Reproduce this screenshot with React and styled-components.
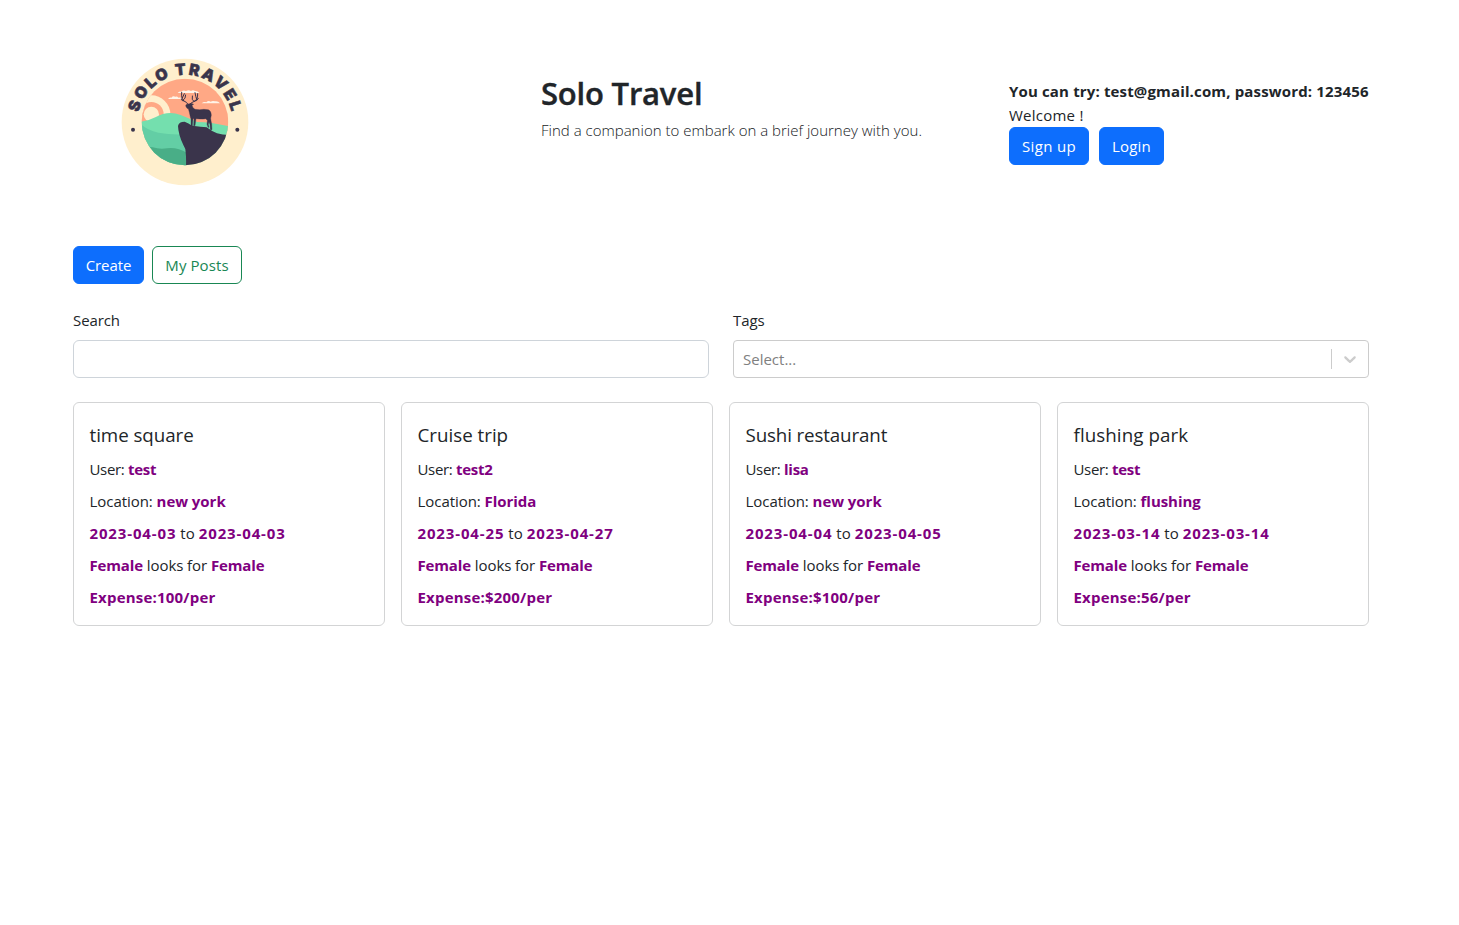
import React from 'react';
import styled, { createGlobalStyle } from 'styled-components';

const GlobalStyle = createGlobalStyle`
  *, *::before, *::after { box-sizing: border-box; }
  body {
    margin: 0;
    background: #fff;
    color: #212529;
    font-family: 'Open Sans', 'Noto Sans', sans-serif;
    font-size: 15px;
    line-height: 24px;
  }
  h1, h2, p { margin: 0; }
`;

const Page = styled.div`
  width: 1296px;
  margin-left: 73px;
`;

const Header = styled.header`
  display: grid;
  grid-template-columns: 468px 468px 360px;
  padding-top: 50px;
  height: 246px;
  align-items: start;
`;

const Logo = styled.svg`
  display: block;
  width: 140px;
  height: 140px;
  margin-left: 42px;
`;

const LogoText = styled.text`
  font-family: Inter, Roboto, sans-serif;
  font-weight: 900;
  font-size: 47px;
  fill: #3a344b;
  stroke: #3a344b;
  stroke-width: 1.5px;
`;

const Intro = styled.div`
  padding-top: 24px;
`;

const Title = styled.h1`
  font-size: 31px;
  font-weight: 600;
  line-height: 38px;
  letter-spacing: -0.2px;
  -webkit-text-stroke: 0.4px #212529;
  margin-bottom: 6px;
`;

const Lead = styled.p`
  font-weight: 300;
  color: #16191c;
  letter-spacing: 0.01px;
  white-space: nowrap;
`;

const Account = styled.div`
  padding-top: 29px;
  white-space: nowrap;
`;

const Run = styled.span`
  letter-spacing: ${({ $track }) => $track || 0}px;
  white-space: pre;
`;

const Hint = styled.p`
  font-weight: 700;
  letter-spacing: 0.15px;
`;

const ButtonRow = styled.div`
  display: flex;
  gap: ${({ $gap }) => $gap}px;
`;

const Button = styled.button`
  width: ${({ $width }) => $width}px;
  height: 38px;
  padding: 0;
  border: 1px solid ${({ $outline }) => ($outline ? '#198754' : '#0d6efd')};
  border-radius: 6px;
  background: ${({ $outline }) => ($outline ? '#fff' : '#0d6efd')};
  color: ${({ $outline }) => ($outline ? '#198754' : '#fff')};
  font: inherit;
  text-align: center;
`;

const Filters = styled.div`
  display: grid;
  grid-template-columns: 1fr 1fr;
  gap: 24px;
  padding: 24px 0;
`;

const Field = styled.div`
  display: flex;
  flex-direction: column;
  gap: 8px;
`;

const Label = styled.label`
  letter-spacing: -0.1px;
`;

const Input = styled.input`
  height: 38px;
  width: 100%;
  border: 1px solid #ced4da;
  border-radius: 6px;
  background: #fff;
  padding: 6px 12px;
  font: inherit;
`;

const Select = styled.div`
  display: flex;
  align-items: center;
  height: 38px;
  border: 1px solid #ccc;
  border-radius: 4px;
  padding-left: 9px;
  color: #808080;
`;

const Placeholder = styled.span`
  flex: 1;
`;

const Divider = styled.span`
  width: 1px;
  height: 20px;
  background: #ccc;
`;

const Chevron = styled.svg`
  width: 20px;
  height: 20px;
  margin: 0 8px;
  fill: #ccc;
`;

const Cards = styled.main`
  display: grid;
  grid-template-columns: repeat(4, 1fr);
  gap: 16px;
`;

const Card = styled.article`
  height: 224px;
  padding: 20px 15.5px 0;
  border: 1px solid #d3d4d5;
  border-radius: 6px;
`;

const CardTitle = styled.h2`
  font-size: 18.75px;
  font-weight: 400;
  line-height: 24px;
  margin-bottom: 10px;
  letter-spacing: ${({ $track }) => $track}px;
`;

const Line = styled.p`
  margin-bottom: 8px;
  white-space: nowrap;
`;

const Value = styled.strong`
  color: #800080;
  font-weight: 700;
  letter-spacing: ${({ $track }) => $track || 0}px;
`;

const trips = [
  { title: 'time square', track: -0.05, user: 'test', place: 'new york', from: '2023-04-03', to: '2023-04-03', cost: '100/per' },
  { title: 'Cruise trip', track: 0, user: 'test2', place: 'Florida', from: '2023-04-25', to: '2023-04-27', cost: '$200/per' },
  { title: 'Sushi restaurant', track: -0.13, user: 'lisa', place: 'new york', from: '2023-04-04', to: '2023-04-05', cost: '$100/per' },
  { title: 'flushing park', track: 0.08, user: 'test', place: 'flushing', from: '2023-03-14', to: '2023-03-14', cost: '56/per' },
];

function TravelLogo() {
  return (
    <Logo viewBox="0 0 420 420" role="img" aria-label="Solo Travel">
      <defs>
        <clipPath id="scene"><circle cx="210" cy="216" r="130" /></clipPath>
        <path id="arc" d="M71.6 248A142 142 0 1 1 348.4 248" />
      </defs>
      <circle cx="210" cy="216" r="190" fill="#ffefcd" />
      <g clipPath="url(#scene)">
        <rect x="80" y="86" width="260" height="260" fill="#ffa885" />
        <circle cx="109" cy="193" r="57" fill="#ffefcd" />
        <circle cx="109" cy="193" r="37" fill="#ffa885" />
        <circle cx="109" cy="193" r="23" fill="#ffefcd" />
        <path d="M159 147q5-5 10-4 5-7 12-3 6-2 9 3 8-1 12 4zM188 129q5-5 11-4 6-6 14-2 8-5 15 0 6-4 12 0 8-1 13 6zM260 160q7-6 14-3 6-7 13-2 6-4 13-1 9-2 15 6z" fill="#fff4e8" />
        <path d="M75 216q25-3 46-14 38-22 76-7 27 11 50 21 40 0 100 14v125H75z" fill="#74dfae" />
        <path d="M75 220q20 21 55 28 35 6 68 5l30 110H75z" fill="#63cea5" />
        <path d="M75 293q20-5 38-1 22 7 43 3 31-4 60 14v60H75z" fill="#49ae87" />
        <path d="M213 350q1-28-1-42 0-13-7-23-15-31-16-57 2-13 20-13 12 5 22 12 28 3 44 5 14 11 31 18 17 5 38 5v95z" fill="#3a344b" />
        <path d="M219 162l-6 2-1 4 4 7 4 1 3 11 3 14 2 6v21h4l2-22 3 0-1 21h4l3-21 12 1q9 1 17-1l5 5-1 12 3 9h3l-2-9 2-7 3 8 1 15h5l-1-17-2-10-1-7 2-9q0-13-9-17-14-2-26 0l-14-1-6-5-3-7 5-3-7-3z" fill="#3a344b" stroke="#3a344b" strokeWidth="1" strokeLinejoin="round" />
        <path d="M219 163q-3-7-12-10-9-6-7-26M206 153q-6 1-7-6M202 144l6-13M205 150q7-3 7-15M224 163q5-6 14-9 11-5 10-23M238 154q9 0 12-9M245 148q-3-8-5-20M236 154q-7-4-4-16" fill="none" stroke="#3a344b" strokeWidth="3" strokeLinecap="round" />
      </g>
      <circle cx="54" cy="239" r="6" fill="#3a344b" />
      <circle cx="367" cy="239" r="6" fill="#3a344b" />
      <LogoText><textPath href="#arc" startOffset="61" textLength="147">SOLO</textPath></LogoText>
      <LogoText><textPath href="#arc" startOffset="226" textLength="221">TRAVEL</textPath></LogoText>
    </Logo>
  );
}

function TripCard({ trip }) {
  return (
    <Card>
      <CardTitle $track={trip.track}>{trip.title}</CardTitle>
      <Line><Run $track={-0.33}>{'User: '}</Run><Value $track={-0.25}>{trip.user}</Value></Line>
      <Line><Run $track={-0.05}>{'Location: '}</Run><Value $track={-0.04}>{trip.place}</Value></Line>
      <Line><Value $track={0.86}>{trip.from}</Value><Run $track={0.06}>{' to '}</Run><Value $track={0.86}>{trip.to}</Value></Line>
      <Line><Value $track={-0.15}>Female</Value><Run $track={-0.07}>{' looks for '}</Run><Value $track={-0.15}>Female</Value></Line>
      <Line><Value $track={0.2}>Expense:{trip.cost}</Value></Line>
    </Card>
  );
}

export default function App() {
  return (
    <>
      <GlobalStyle />
      <Page>
        <Header>
          <TravelLogo />
          <Intro>
            <Title>Solo Travel</Title>
            <Lead>Find a companion to embark on a brief journey with you.</Lead>
          </Intro>
          <Account>
            <Hint>You can try: test@gmail.com, password: 123456</Hint>
            <p><Run $track={0.24}>Welcome !</Run></p>
            <ButtonRow $gap={10}>
              <Button $width={80}><Run $track={0.33}>Sign up</Run></Button>
              <Button $width={65}><Run $track={0.2}>Login</Run></Button>
            </ButtonRow>
          </Account>
        </Header>
        <ButtonRow $gap={8}>
          <Button $width={71}><Run $track={-0.1}>Create</Run></Button>
          <Button $width={90} $outline><Run $track={0.1}>My Posts</Run></Button>
        </ButtonRow>
        <Filters>
          <Field>
            <Label htmlFor="search">Search</Label>
            <Input id="search" />
          </Field>
          <Field>
            <Label>Tags</Label>
            <Select>
              <Placeholder>Select...</Placeholder>
              <Divider />
              <Chevron viewBox="0 0 20 20">
                <path d="M4.516 7.548c0.436-0.446 1.043-0.481 1.576 0l3.908 3.747 3.908-3.747c0.533-0.481 1.141-0.446 1.574 0 0.436 0.445 0.408 1.197 0 1.615-0.406 0.418-4.695 4.502-4.695 4.502-0.217 0.223-0.502 0.335-0.787 0.335s-0.57-0.112-0.789-0.335c0 0-4.287-4.084-4.695-4.502s-0.436-1.17 0-1.615z" />
              </Chevron>
            </Select>
          </Field>
        </Filters>
        <Cards>
          {trips.map((trip) => <TripCard key={trip.title} trip={trip} />)}
        </Cards>
      </Page>
    </>
  );
}
